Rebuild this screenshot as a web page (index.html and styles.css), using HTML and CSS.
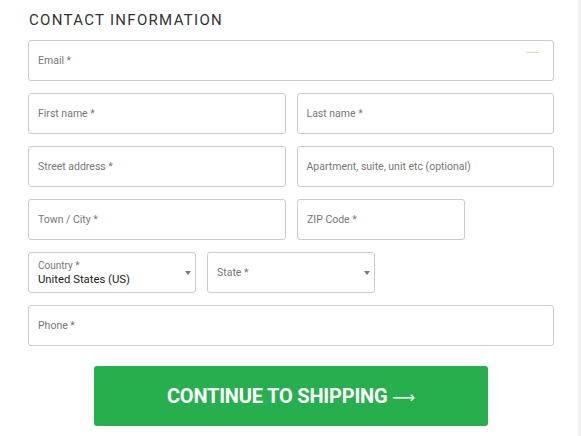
FILE: index.html
```html
<!DOCTYPE html>
<html lang="en">
<head>
<meta charset="utf-8">
<title>Contact information</title>
<link rel="stylesheet" href="styles.css">
</head>
<body>
<div class="page">
  <form class="form">
    <h2 class="title">CONTACT INFORMATION</h2>
    <div class="row">
      <div class="field full email"><span class="label">Email *</span><span class="dash"></span></div>
    </div>
    <div class="row">
      <div class="field half"><span class="label">First name *</span></div>
      <div class="field half"><span class="label">Last name *</span></div>
    </div>
    <div class="row">
      <div class="field half"><span class="label">Street address *</span></div>
      <div class="field half"><span class="label">Apartment, suite, unit etc (optional)</span></div>
    </div>
    <div class="row">
      <div class="field half"><span class="label">Town / City *</span></div>
      <div class="field third"><span class="label">ZIP Code *</span></div>
    </div>
    <div class="row">
      <div class="field third select">
        <div class="stack"><span class="small-label">Country *</span><span class="value">United States (US)</span></div>
        <span class="caret"></span>
      </div>
      <div class="field third select">
        <span class="label">State *</span>
        <span class="caret"></span>
      </div>
    </div>
    <div class="row">
      <div class="field full"><span class="label">Phone *</span></div>
    </div>
    <div class="actions">
      <button type="button" class="btn">CONTINUE TO SHIPPING <span class="arrow">⟶</span></button>
    </div>
  </form>
</div>
</body>
</html>
```
FILE: styles.css
```css
html, body {
  margin: 0;
  padding: 0;
  background: #ffffff;
}
body {
  font-family: Roboto, "Liberation Sans", Arial, sans-serif;
}
.page {
  width: 578px;
  min-height: 436px;
  border-right: 3px solid #f2f2f2;
  box-sizing: content-box;
}
.form {
  padding: 10px 0 0 28px;
  width: 526px;
  display: flex;
  flex-direction: column;
  gap: 12px;
}
.title {
  margin: 0 0 0 1px;
  font-size: 15px;
  font-weight: 400;
  letter-spacing: 1.3px;
  color: #333333;
  line-height: 20px;
  height: 18px;
}
.row {
  display: flex;
  gap: 11px;
}
.field {
  position: relative;
  box-sizing: border-box;
  height: 41px;
  border: 1px solid #cccccc;
  border-radius: 3px;
  display: flex;
  align-items: center;
  padding: 0 9px;
}
.full { width: 526px; }
.half { width: 258px; }
.third { width: 168px; }
.label {
  font-size: 10.5px;
  color: #777777;
}
.dash {
  position: absolute;
  left: 497px;
  top: 11px;
  width: 13px;
  height: 1px;
  background: #f6d2b6;
}
.select {
  justify-content: space-between;
}
.stack {
  display: flex;
  flex-direction: column;
  padding-top: 1px;
}
.small-label {
  font-size: 10px;
  color: #777777;
  line-height: 12px;
}
.value {
  font-size: 11.3px;
  color: #222222;
  line-height: 15px;
}
.caret {
  width: 0;
  height: 0;
  border-left: 3px solid transparent;
  border-right: 3px solid transparent;
  border-top: 4px solid #777777;
  margin-right: -5px;
}
.actions {
  display: flex;
  justify-content: center;
  padding-top: 8px;
}
.btn {
  width: 394px;
  height: 60px;
  border: none;
  border-radius: 3px;
  background: #27af4e;
  color: #ffffff;
  font-family: Roboto, "Liberation Sans", Arial, sans-serif;
  font-weight: 700;
  font-size: 20px;
  letter-spacing: -0.2px;
  cursor: pointer;
  padding: 0;
}
.arrow {
  font-family: "DejaVu Sans", sans-serif;
  font-weight: 400;
  font-size: 16px;
  letter-spacing: 0;
}
```
